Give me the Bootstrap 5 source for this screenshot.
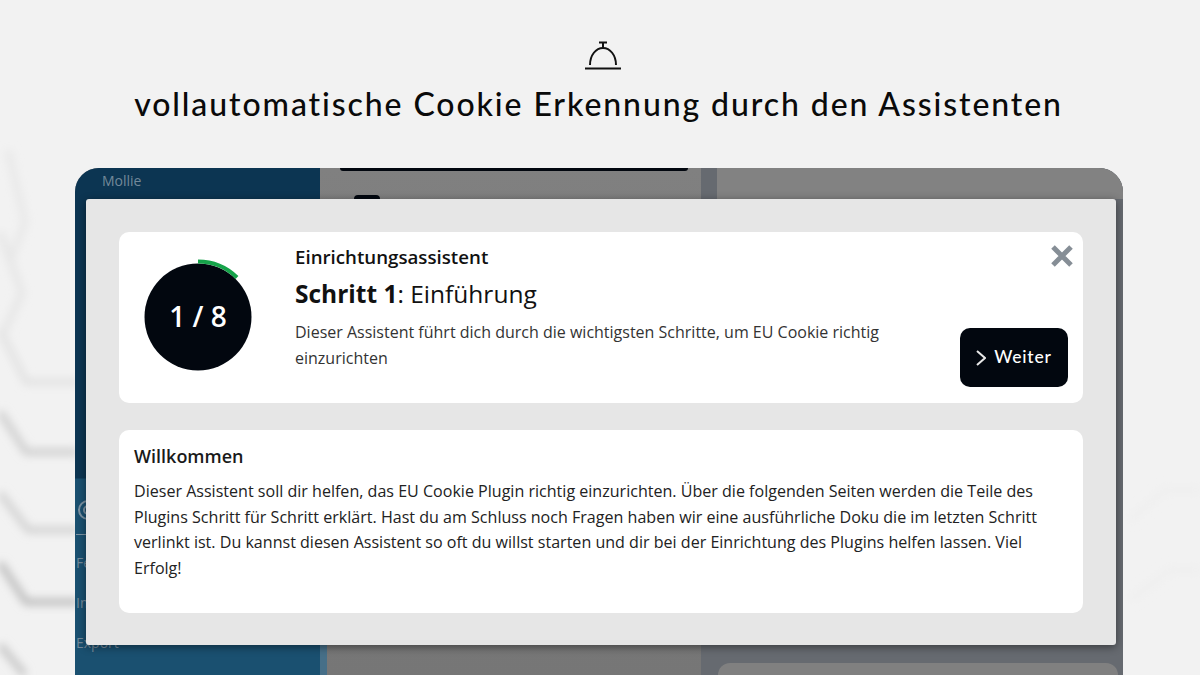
<!DOCTYPE html>
<html lang="de">
<head>
    <meta charset="UTF-8">
    <title>Cookie Assistent</title>
    <link href="https://cdn.jsdelivr.net/npm/bootstrap@5.3.5/dist/css/bootstrap.min.css" rel="stylesheet">
    <style>
        body {
            background-color: #f2f2f2;
            font-family: "Open Sans", "Noto Sans", sans-serif;
            color: #212529;
            height: 675px;
            overflow: hidden;
        }
        .bg-hex { position: absolute; top: 0; left: 0; z-index: 0; }
        .promo-head { height: 168px; padding-top: 41px; position: relative; z-index: 1; }
        .promo-bell { margin-left: 6px; }
        .promo-title {
            font-family: "Lato", sans-serif;
            font-size: 32px;
            font-weight: 500;
            letter-spacing: 1.9px;
            line-height: 44px;
            color: #0a0a0a;
            margin: 11px 3px 0 0;
        }
        .app-window {
            position: relative;
            z-index: 1;
            height: 507px;
            margin: 0 77px 0 75px;
            border-radius: 24px 24px 0 0;
            overflow: hidden;
            background-color: #666a70;
        }
        .side-col {
            width: 245px;
            background: linear-gradient(#0c3552 0, #0c3552 310px, #1a5070 311px, #1a5070 100%);
            color: #73899a;
            font-size: 14px;
        }
        .side-top { height: 310px; padding: 2px 0 0 27px; }
        .side-mid { padding: 20px 0 0 1px; }
        .side-rule { height: 1px; background-color: #7d93a3; margin: 12px 0 18px; width: 40px; }
        .side-mid div.side-item { height: 40px; line-height: 20px; }
        .mid-col { width: 381px; background: linear-gradient(#808080, #767676); }
        .mid-bar { height: 3px; margin: 0 13px 0 20px; background-color: #02070f; border-radius: 0 0 6px 6px; }
        .mid-box { width: 26px; height: 20px; margin: 24px 0 0 34px; background-color: #02070f; border-radius: 4px; }
        .mid-strip { width: 7px; height: 60px; background-color: #466f88; }
        .right-gap { width: 16px; background-color: #666a70; }
        .right-col { background-color: #666a70; }
        .right-top { height: 31px; background-color: #828282; }
        .right-card { height: 12px; margin: 0 5px 0 1px; background-color: #808080; border-radius: 12px 12px 0 0; }
        .wizard {
            position: absolute;
            top: 31px;
            left: 11px;
            width: 1030px;
            height: 446px;
            padding: 33px;
            background-color: #e6e6e6;
            border-radius: 3px;
            box-shadow: 0 2px 9px rgba(0, 0, 0, .45);
        }
        .wizard-card { background-color: #fff; border-radius: 10px; position: relative; }
        .wizard-head { height: 171px; padding: 0 15px 16px 25px; margin-bottom: 27px; }
        .wizard-body { height: 183px; padding: 14px 15px; }
        .step-ring { width: 112px; height: 116px; margin: 23px 39px 0 0; }
        .step-num { font-size: 28px; font-weight: 600; fill: #fff; font-family: "Open Sans", sans-serif; }
        .head-text { width: 620px; padding-top: 13px; }
        .kicker { font-size: 18.7px; font-weight: 600; line-height: 24px; margin: 0 0 9px; color: #111; }
        .step-title { font-size: 24.5px; font-weight: 400; line-height: 32px; margin: 0 0 9px; color: #111; }
        .step-title strong { font-weight: 700; }
        .step-desc { font-size: 16px; line-height: 26px; margin: 0; color: #333; }
        .close-x { position: absolute; top: 13px; right: 10px; width: 22px; height: 22px; }
        .btn-next {
            width: 108px;
            height: 59px;
            background-color: #02070f;
            color: #fff;
            border-radius: 10px;
            border: 0;
            font-family: "Lato", sans-serif;
            font-size: 17.5px;
            font-weight: 500;
            letter-spacing: .8px;
        }
        .welcome { font-size: 18px; font-weight: 600; line-height: 24px; margin: 0 0 11px; color: #1a1a1a; }
        .welcome-text { font-size: 16.07px; line-height: 25.6px; margin: 0; color: #222; }
    </style>
</head>
<body>
<svg class="bg-hex" width="1200" height="675" viewBox="0 0 1200 675" fill="none" stroke-linejoin="round">
    <defs><filter id="softBlur"><feGaussianBlur stdDeviation="4"></feGaussianBlur></filter></defs>
    <g filter="url(#softBlur)" stroke-width="7">
        <path d="M8 150 L25 222 L10 262" stroke="#e8e8e8"></path>
        <path d="M0 232 L22 293 L4 332" stroke="#e6e6e6"></path>
        <path d="M0 330 L26 382 L78 382" stroke="#e2e2e2"></path>
        <path d="M0 412 L26 452 L78 452" stroke="#cfcfcf"></path>
        <path d="M0 493 L28 530 L78 530" stroke="#d2d2d2"></path>
        <path d="M0 563 L26 602 L78 602" stroke="#bdbdbd"></path>
        <path d="M0 645 L25 675" stroke="#c6c6c6"></path>
        <path d="M1130 520 L1165 490 L1200 490" stroke="#efefef"></path>
        <path d="M1130 600 L1170 570 L1200 570" stroke="#efefef"></path>
    </g>
</svg>

<div class="promo-head d-flex flex-column align-items-center">
    <svg class="promo-bell" width="36" height="30" viewBox="0 0 36 30" fill="none" stroke="#111" stroke-width="2">
        <path d="M14 1.5 H22 M18 1.5 V7"></path>
        <path d="M5 24 C5 14 11 7 18 7 C25 7 31 14 31 24"></path>
        <path d="M0 27.5 H36"></path>
    </svg>
    <h1 class="promo-title">vollautomatische Cookie Erkennung durch den Assistenten</h1>
</div>

<div class="app-window d-flex">
    <div class="side-col flex-shrink-0">
        <div class="side-top">Mollie</div>
        <div class="side-mid">
            <svg width="24" height="24" viewBox="0 0 24 24" fill="none" stroke="#7d93a3" stroke-width="2">
                <circle cx="12" cy="12" r="9"></circle>
                <circle cx="12" cy="12" r="4"></circle>
            </svg>
            <div class="side-rule"></div>
            <div class="side-item">Features</div>
            <div class="side-item">Import</div>
            <div class="side-item">Export</div>
        </div>
    </div>
    <div class="mid-col flex-shrink-0 d-flex flex-column">
        <div class="mid-bar"></div>
        <div class="mid-box"></div>
        <div class="mid-strip mt-auto"></div>
    </div>
    <div class="right-gap flex-shrink-0"></div>
    <div class="right-col flex-grow-1 d-flex flex-column justify-content-between">
        <div class="right-top"></div>
        <div class="right-card"></div>
    </div>

    <div class="wizard">
        <div class="wizard-card wizard-head d-flex">
            <svg class="step-ring flex-shrink-0" viewBox="0 0 112 116">
                <circle cx="54" cy="62" r="53.5" fill="#02070f"></circle>
                <path d="M54 6.5 A55.5 55.5 0 0 1 93 22.5" fill="none" stroke="#16a34a" stroke-width="4"></path>
                <text class="step-num" x="54" y="72" text-anchor="middle">1 / 8</text>
            </svg>
            <div class="head-text flex-shrink-0">
                <p class="kicker">Einrichtungsassistent</p>
                <h2 class="step-title"><strong>Schritt 1</strong>: Einführung</h2>
                <p class="step-desc">Dieser Assistent führt dich durch die wichtigsten Schritte, um EU Cookie richtig einzurichten</p>
            </div>
            <div class="ms-auto align-self-end">
                <button type="button" class="btn btn-next d-flex align-items-center justify-content-center gap-2">
                    <svg width="10" height="16" viewBox="0 0 10 16" fill="none" stroke="#e8e8e8" stroke-width="2"><path d="M1 1 L9 8 L1 15"></path></svg>
                    Weiter
                </button>
            </div>
            <svg class="close-x" viewBox="0 0 22 22" stroke="#868e96" stroke-width="5"><path d="M2 2 L20 20 M20 2 L2 20"></path></svg>
        </div>
        <div class="wizard-card wizard-body">
            <h3 class="welcome">Willkommen</h3>
            <p class="welcome-text">Dieser Assistent soll dir helfen, das EU Cookie Plugin richtig einzurichten. Über die folgenden Seiten werden die Teile des Plugins Schritt für Schritt erklärt. Hast du am Schluss noch Fragen haben wir eine ausführliche Doku die im letzten Schritt verlinkt ist. Du kannst diesen Assistent so oft du willst starten und dir bei der Einrichtung des Plugins helfen lassen. Viel Erfolg!</p>
        </div>
    </div>
</div>

<script src="https://cdn.jsdelivr.net/npm/bootstrap@5.3.5/dist/js/bootstrap.bundle.min.js"></script>
</body>
</html>
